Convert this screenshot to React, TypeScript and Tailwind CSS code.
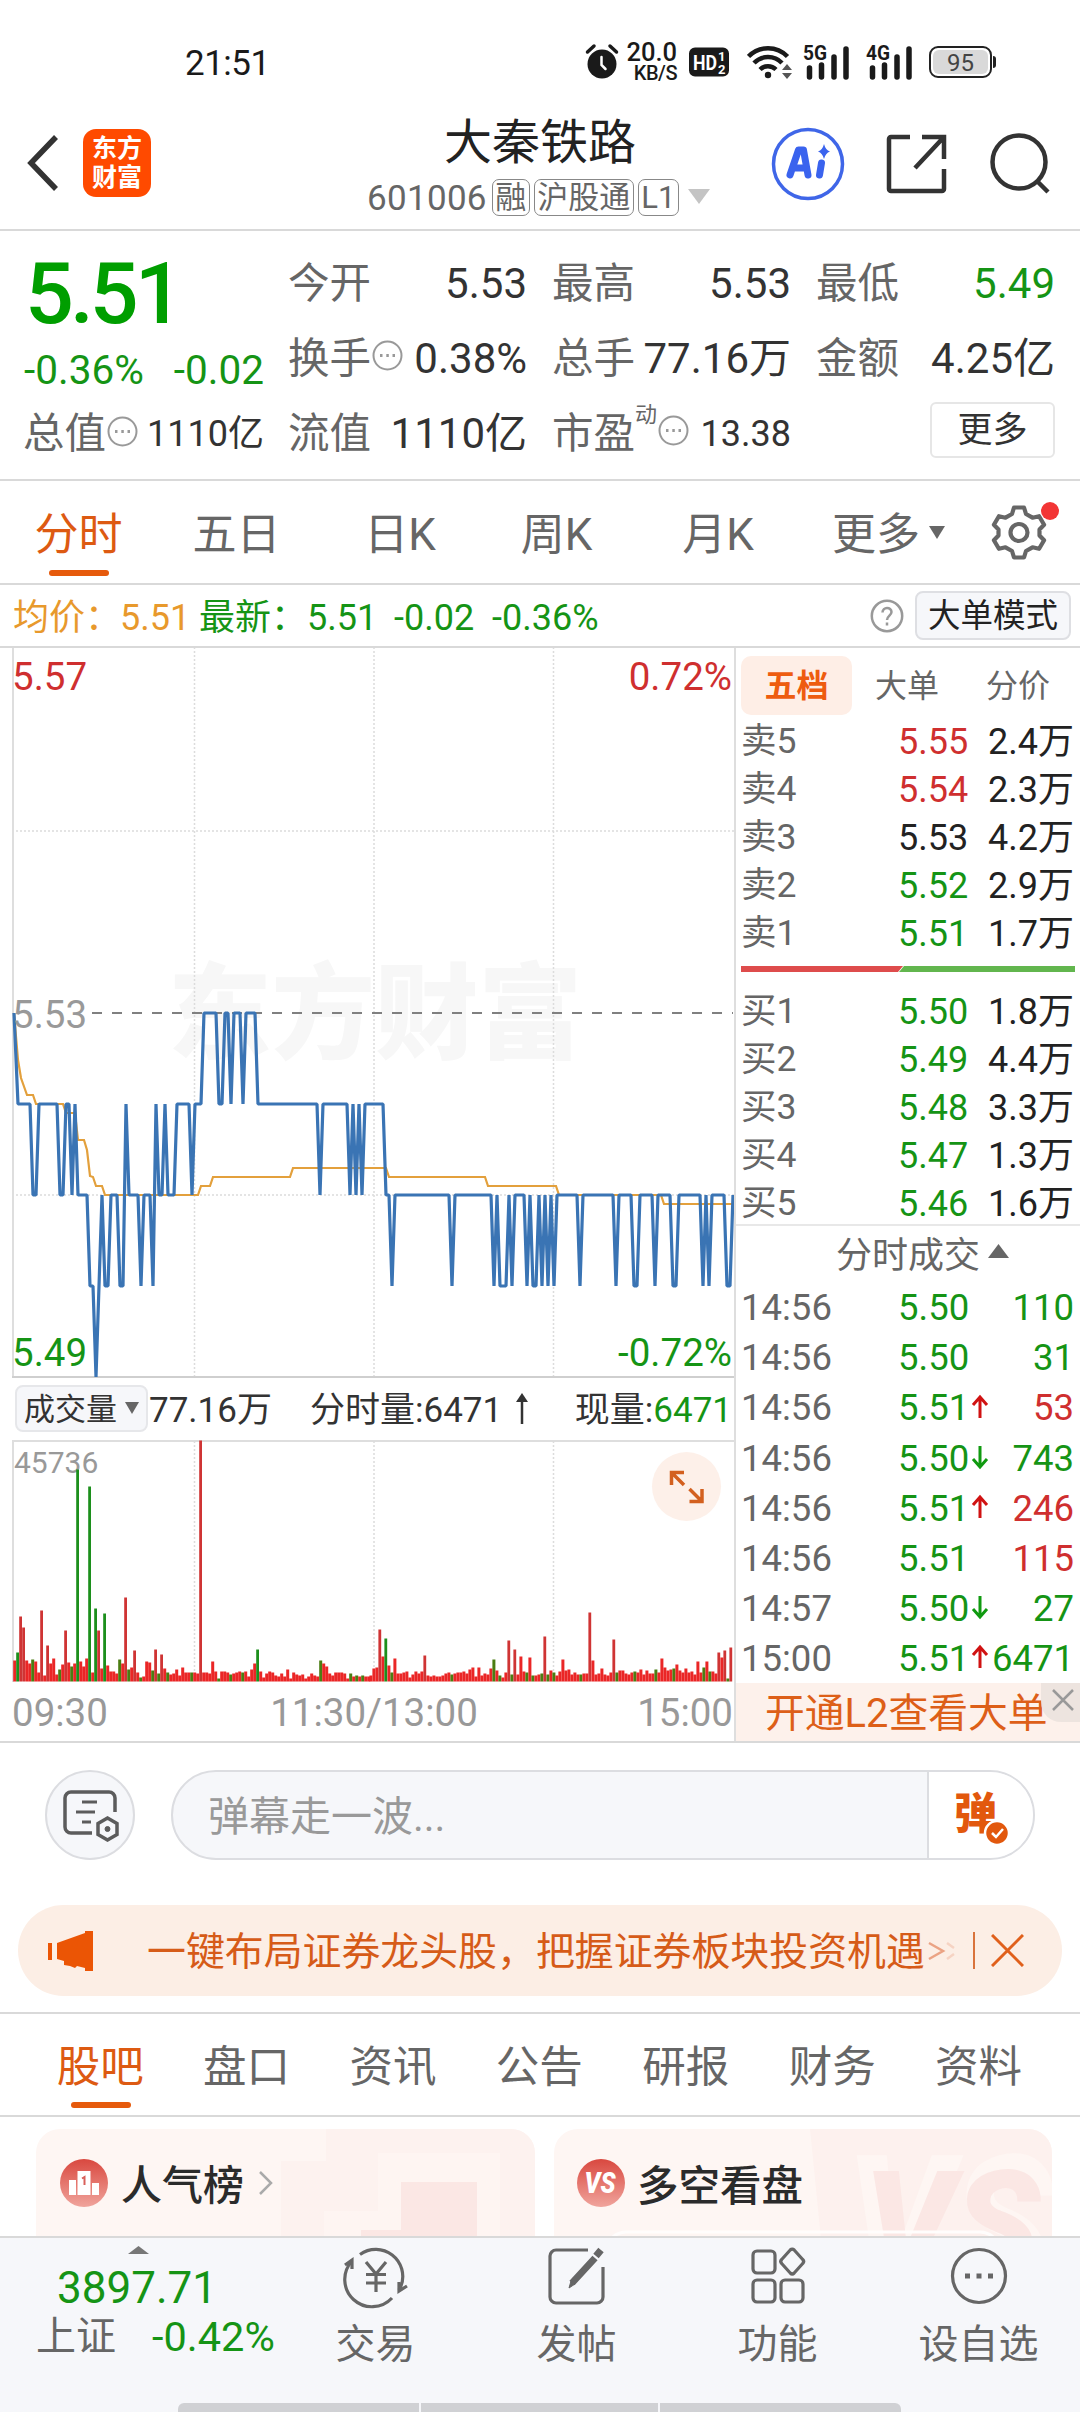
import React from 'react';
import clsx from 'clsx';

const UP = '#cf2f2f';
const DOWN = '#159415';

// [x, price in cents over 5.00]
const PRICE: [number, number][] = [
  [14, 53], [18, 52], [30, 52], [33, 51], [36, 51], [39, 52], [57, 52], [60, 51], [63, 51], [66, 52], [69, 52], [72, 51],
  [75, 52], [78, 51], [87, 51], [90, 50], [93, 50], [96, 49], [102, 51], [105, 50], [108, 50], [111, 51], [117, 51],
  [120, 50], [123, 50], [126, 52], [129, 51], [138, 51], [141, 50], [144, 51], [150, 51], [153, 50], [156, 52], [159, 51],
  [162, 51], [165, 52], [168, 51], [174, 51], [177, 52], [189, 52], [192, 51], [195, 52], [201, 52], [204, 53], [216, 53],
  [219, 52], [222, 52], [225, 53], [228, 53], [231, 52], [234, 53], [240, 53], [243, 52], [246, 53], [255, 53], [258, 52],
  [317, 52], [320, 51], [323, 52], [347, 52], [350, 51], [353, 52], [356, 51], [359, 52], [362, 51], [365, 52], [383, 52],
  [386, 51], [389, 51], [392, 50], [395, 51], [449, 51], [452, 50], [455, 51], [491, 51], [494, 50], [497, 51], [500, 50],
  [506, 50], [509, 51], [512, 50], [515, 51], [524, 51], [527, 50], [530, 51], [533, 50], [536, 50], [539, 51], [542, 50],
  [545, 51], [548, 50], [551, 51], [554, 50], [557, 51], [577, 51], [580, 50], [583, 51], [613, 51], [616, 50], [619, 51],
  [631, 51], [634, 50], [637, 50], [640, 51], [652, 51], [655, 50], [658, 51], [670, 51], [673, 50], [676, 50], [679, 51],
  [700, 51], [703, 50], [706, 51], [709, 50], [712, 51], [724, 51], [727, 50], [730, 50], [733, 51],
];

const AVERAGE =
  '14,366 18,413 21,431 27,448 33,448 36,457 63,457 66,466 75,466 78,493 84,493 87,503 90,529 93,530 96,539 102,539 105,548 198,548 201,539 210,539 213,530 290,530 293,521 386,521 389,530 485,530 488,539 556,539 559,548 661,548 664,557 733,557';

// minute volume bars, "g" marks a falling minute
const VOLUME =
  '21 29g 65 54 21 18 22g 20 9 71 6 36 18 23 7 12g 17 51 19 15g 18 212g 20 15 23 195g 9 73g 51 13 68g 16 10 10 8 22g 18 84 12g 14 31 9 4g 5 20 19 11g 32 8g 27 13 9g 7 8 12 6 14 9 9 9g 9 8 241 9 9 8 20 10 3g 10 10 9 7g 8 9 10 9g 10 5 12 18 32g 10 4 8 10 9 6 5 8 5 12 3 9 7 6 7 3 5 8 6 5 21g 18 15 8 6 9 9 9 8 3 8g 5 6g 5 6g 5 5 6 13 14 52 25 43g 16 9g 23 8 8 9 10 4 7 10 8 10 26 6 5 6 5 5 6 8 9 7g 8 9 9 10 8 12 14 5 14 6 8 7 13 22g 11 6g 4 9 41 7g 32 7 25 10 9g 24 6g 6 7 8g 45 7g 11 9g 6 10 22 11 12 7 9 7 7g 8 8 69 21 7 8 13 7 6 9 42 9g 11 11 8 7 9 10g 9 12 7 11 8 8 12g 9 23 14 11 12 13g 17 11 9 13 9 10 7 20 9 14g 20 10g 10 8 29 24 31 3g 34';

const bars = VOLUME.split(' ').map((v) => ({ height: parseInt(v, 10), down: v.endsWith('g') }));

const priceY = (cents: number) => 366 + (53 - cents) * 91;

const sells = [
  { label: '卖5', price: '5.55', qty: '2.4万', color: 'text-[#cf2f2f]' },
  { label: '卖4', price: '5.54', qty: '2.3万', color: 'text-[#cf2f2f]' },
  { label: '卖3', price: '5.53', qty: '4.2万', color: 'text-[#222]' },
  { label: '卖2', price: '5.52', qty: '2.9万', color: 'text-[#159415]' },
  { label: '卖1', price: '5.51', qty: '1.7万', color: 'text-[#159415]' },
];

const buys = [
  { label: '买1', price: '5.50', qty: '1.8万', color: 'text-[#159415]' },
  { label: '买2', price: '5.49', qty: '4.4万', color: 'text-[#159415]' },
  { label: '买3', price: '5.48', qty: '3.3万', color: 'text-[#159415]' },
  { label: '买4', price: '5.47', qty: '1.3万', color: 'text-[#159415]' },
  { label: '买5', price: '5.46', qty: '1.6万', color: 'text-[#159415]' },
];

const trades = [
  { time: '14:56', price: '5.50', dir: '', qty: '110', up: false },
  { time: '14:56', price: '5.50', dir: '', qty: '31', up: false },
  { time: '14:56', price: '5.51', dir: 'up', qty: '53', up: true },
  { time: '14:56', price: '5.50', dir: 'down', qty: '743', up: false },
  { time: '14:56', price: '5.51', dir: 'up', qty: '246', up: true },
  { time: '14:56', price: '5.51', dir: '', qty: '115', up: true },
  { time: '14:57', price: '5.50', dir: 'down', qty: '27', up: false },
  { time: '15:00', price: '5.51', dir: 'up', qty: '6471', up: false },
];

const newsTabs = ['股吧', '盘口', '资讯', '公告', '研报', '财务', '资料'];

const Signal = ({ label }: { label: string }) => (
  <svg className="overflow-visible" width="48" height="36" viewBox="0 0 48 36">
    <text x="0" y="16" fontSize="20" fontWeight="700" fill="#1a1a1a" textLength="24" lengthAdjust="spacingAndGlyphs">
      {label}
    </text>
    <path d="M6.5 24v9M18.5 21v12M31 13v20M43 5v28" stroke="#1a1a1a" strokeWidth="5.5" strokeLinecap="round" />
  </svg>
);

const StatusBar = () => (
  <div className="flex h-[120px] items-center pl-[185px] pt-1">
    <span className="w-[400px] pt-[2px] text-[35px] leading-none tracking-[-0.5px] text-[#1a1a1a]">21:51</span>
    <svg width="34" height="38" viewBox="0 0 34 38">
      <circle cx="17" cy="21" r="14.5" fill="#1a1a1a" />
      <path d="M2.5 9 9 3M31.500 9 25 3" stroke="#1a1a1a" strokeWidth="3.500" strokeLinecap="round" />
      <path d="M16.500 14v8l4 4" stroke="#fff" strokeWidth="2.500" fill="none" strokeLinecap="round" />
    </svg>
    <div className="ml-[6px] flex w-[52px] flex-col items-end text-[#1a1a1a]">
      <span className="text-[25.500px] font-medium leading-[23px]">20.0</span>
      <span className="text-[20px] font-medium leading-[19px] tracking-[-0.5px]">KB/S</span>
    </div>
    <svg className="ml-[12px]" width="41" height="30" viewBox="0 0 41 30">
      <path d="M6 .5h28a6 6 0 0 1 6 6v17a6 6 0 0 1-6 6H6a6 6 0 0 1-6-6v-17a6 6 0 0 1 6-6z" fill="#1a1a1a" />
      <text x="4" y="22.500" fontSize="21" fontWeight="700" fill="#fff" textLength="24" lengthAdjust="spacingAndGlyphs">HD</text>
      <text x="29" y="14" fontSize="13" fontWeight="700" fill="#fff">1</text>
      <text x="29" y="27" fontSize="13" fontWeight="700" fill="#fff">2</text>
    </svg>
    <svg className="ml-[17px]" width="46" height="36" viewBox="0 0 46 36">
      <g fill="none" stroke="#1a1a1a" strokeWidth="4.500">
        <path d="M1.500 12.500a27 27 0 0 1 39 0" />
        <path d="M7 19a19.500 19.500 0 0 1 28 0" />
        <path d="M13 25.500a11.500 11.500 0 0 1 16 0" />
      </g>
      <circle cx="21" cy="31" r="3.200" fill="#1a1a1a" />
      <path d="m40 20 5 6H35zM40 35l5-6H35z" fill="#555" />
    </svg>
    <div className="ml-[10px]"><Signal label="5G" /></div>
    <div className="ml-[15px]"><Signal label="4G" /></div>
    <div className="ml-[15px] flex h-[32px] w-[63px] items-center justify-center rounded-[9px] border-2 border-[#222] p-[2px]">
      <div className="flex h-full w-full items-center justify-center rounded-[6px] bg-[#d9d9d9] pt-px text-[24px] leading-none text-[#444]">95</div>
    </div>
    <div className="ml-px h-[12px] w-[3px] rounded-r bg-[#222]" />
  </div>
);

const Tag = ({ children }: { children: React.ReactNode }) => (
  <span className="flex h-[37px] shrink-0 items-center whitespace-nowrap rounded-[7px] border-[1.5px] border-[#888] px-[2.5px] text-[31px] leading-none">{children}</span>
);

const Header = () => (
  <div className="flex h-[111px] items-center border-b-2 border-[#d9d9d9]">
    <svg className="ml-[26px] mt-[-24px]" width="34" height="58" viewBox="0 0 34 58">
      <path d="M30 3 5 29l25 26" fill="none" stroke="#333" strokeWidth="5.500" />
    </svg>
    <div className="ml-[23px] mt-[-24px] flex h-[68px] w-[68px] flex-col items-center justify-center rounded-[13px] bg-[#ff4a00] text-[25px] font-bold leading-[29px] text-white">
      <span>东方</span>
      <span>财富</span>
    </div>
    <div className="ml-[216px] mt-[-15px] flex w-[346px] flex-col">
      <h1 className="h-[60px] pl-[77px] text-[48px] leading-[48px] text-[#222]">大秦铁路</h1>
      <div className="flex h-[37px] items-center gap-[4px] text-[#666]">
        <span className="mr-px pt-[2px] text-[35px] leading-none tracking-[0.3px]">601006</span>
        <Tag>融</Tag>
        <Tag>沪股通</Tag>
        <Tag>L1</Tag>
        <svg className="ml-[5px] shrink-0" width="22" height="16" viewBox="0 0 22 16"><path d="M0 0h22L11 15z" fill="#c4c4c4" /></svg>
      </div>
    </div>
    <svg className="ml-[58px] mt-[-22px]" width="74" height="74" viewBox="0 0 74 74">
      <circle cx="37" cy="37" r="34.500" fill="none" stroke="#3f66e8" strokeWidth="3.500" />
      <path d="M19 48 27.500 23h5L37 48M22 41h12" fill="none" stroke="#3a63ee" strokeWidth="7" strokeLinejoin="round" strokeLinecap="round" />
      <path d="M50.500 36 48.500 48" stroke="#3a63ee" strokeWidth="7" strokeLinecap="round" />
      <path d="M53 17q1.500 6 6 7.500-4.500 1.500-6 7.500-1.500-6-6-7.500 4.500-1.500 6-7.500z" fill="#3a63ee" />
    </svg>
    <svg className="ml-[41px] mt-[-22px]" width="62" height="62" viewBox="0 0 62 62" fill="none" stroke="#333" strokeWidth="4.500">
      <path d="M24 4H5a2 2 0 0 0-2 2v50a2 2 0 0 0 2 2h51a2 2 0 0 0 2-2V36" />
      <path d="M36 4h22v22M58 4 29 35" />
    </svg>
    <svg className="ml-[41px] mt-[-22px]" width="64" height="64" viewBox="0 0 64 64" fill="none" stroke="#333" strokeWidth="4.500">
      <circle cx="30" cy="30" r="26.500" />
      <path d="m48 49 11 11" />
    </svg>
  </div>
);

const MoreDot = () => (
  <svg width="31" height="31" viewBox="0 0 31 31">
    <circle cx="15.500" cy="15.500" r="14" fill="none" stroke="#999" strokeWidth="2" />
    <path d="M8 15.500h2.500M14.300 15.500h2.500M20.500 15.500H23" stroke="#999" strokeWidth="2.800" />
  </svg>
);

type CellProps = { label: string; value: string; dots?: boolean; sup?: string; small?: boolean; className?: string };

const Cell = ({ label, value, dots, sup, small, className }: CellProps) => (
  <div className="flex items-center">
    <span className="ml-[-1px] text-[41.500px] text-[#666]">{label}</span>
    {sup && <span className="mt-[-38px] text-[22px] text-[#666]">{sup}</span>}
    {dots && <span className="mt-[-6px] ml-px"><MoreDot /></span>}
    <span className={clsx('ml-auto whitespace-nowrap', small ? 'text-[36px]' : 'text-[42px]', className ?? 'text-[#333]')}>{value}</span>
  </div>
);

const Quote = () => (
  <div className="flex h-[250px] gap-[25px] border-b-2 border-[#d9d9d9] pl-[24px] leading-none">
    <div className="w-[240px]">
      <div className="h-[113px] pl-[1px] pt-[20px] text-[86px] font-medium tracking-[-4px] text-[#009e00]">5.51</div>
      <div className="flex h-[53px] items-center justify-between text-[40.500px] text-[#159415]">
        <span>-0.36%</span>
        <span>-0.02</span>
      </div>
      <div className="grid h-[74px] items-center"><Cell label="总值" value="1110亿" dots small /></div>
    </div>
    <div className="grid w-[766px] grid-cols-3 grid-rows-[75px_75px_75px] gap-x-[26px] pt-[15px]">
      <Cell label="今开" value="5.53" />
      <Cell label="最高" value="5.53" />
      <Cell label="最低" value="5.49" className="text-[#159415]" />
      <Cell label="换手" value="0.38%" dots />
      <Cell label="总手" value="77.16万" />
      <Cell label="金额" value="4.25亿" />
      <Cell label="流值" value="1110亿" />
      <Cell label="市盈" value="13.38" sup="动" dots small />
      <div className="mt-[-7px] flex items-center justify-end">
        <button className="h-[56px] w-[125px] rounded-[6px] border-2 border-[#e6e6e6] text-[35px] text-[#333]">更多</button>
      </div>
    </div>
  </div>
);

const ChartTabs = () => (
  <div className="flex h-[104px] items-center border-b-2 border-[#d9d9d9] pt-[6px] text-[44px] leading-none text-[#666]">
    <div className="relative w-[157px] text-center text-[#dd5a12]">
      分时
      <i className="absolute left-[49px] top-[57px] h-[6px] w-[60px] rounded-full bg-[#e65a0c]" />
    </div>
    <span className="w-[159px] text-center">五日</span>
    <span className="w-[168px] text-center">日K</span>
    <span className="w-[145px] text-center">周K</span>
    <span className="w-[178px] text-center">月K</span>
    <span className="ml-[25px]">更多</span>
    <svg className="mb-[5px] ml-[9px]" width="16" height="13" viewBox="0 0 16 13"><path d="M0 0h16L8 13z" fill="#666" /></svg>
    <div className="relative mb-[6px] ml-[45px]">
      <svg width="58" height="58" viewBox="0 0 58 58" fill="none" stroke="#666" strokeWidth="4.200" strokeLinejoin="round">
        <path d="M24 4.500h10l2 6.500 6.500 3.700 6.600-1.500 5 8.600L49.500 26.500v6l4.600 4.700-5 8.600-6.600-1.500L36 48l-2 6.500H24L22 48l-6.500-3.700-6.600 1.500-5-8.600 4.600-4.700v-6l-4.600-4.700 5-8.600 6.600 1.500L22 11z" />
        <circle cx="29" cy="29.500" r="8.500" />
      </svg>
      <i className="absolute left-[51px] top-[-1px] h-[18px] w-[18px] rounded-full bg-[#f23535]" />
    </div>
  </div>
);

const InfoRow = () => (
  <div className="flex h-[63px] items-center whitespace-pre border-b-2 border-[#d9d9d9] pl-[13px] text-[36px] leading-none text-[#159415]">
    <span className="w-[107px] pt-[4px] text-[#e8992c]">均价：</span>
    <span className="w-[79px] pt-[4px] text-[#e8992c]">5.51</span>
    <span className="w-[108px] pt-[4px]">最新：</span>
    <span className="w-[87px] pt-[4px]">5.51</span>
    <span className="w-[98px] pt-[4px]">-0.02</span>
    <span className="pt-[4px]">-0.36%</span>
    <svg className="ml-auto" width="34" height="34" viewBox="0 0 34 34">
      <circle cx="17" cy="17" r="15.200" fill="none" stroke="#999" strokeWidth="2.500" />
      <path d="M12.500 13.500c0-6 9-6 9-.5 0 3.500-4.500 3.800-4.500 8M17 23.500v3" fill="none" stroke="#999" strokeWidth="2.500" />
    </svg>
    <button className="ml-[11px] mr-[9px] h-[49px] w-[156px] rounded-[8px] border-2 border-[#dedfe3] bg-[#f6f7fa] pt-[2px] text-[32.500px] text-[#222]">大单模式</button>
  </div>
);

const PriceChart = () => (
  <svg className="block" width="735" height="730" viewBox="0 1 735 730">
    <text x="168" y="404" fontSize="104" fontWeight="900" fill="#f7f7f7" textLength="414" lengthAdjust="spacingAndGlyphs">东方财富</text>
    <g stroke="#dcdcdc" strokeWidth="1.500" strokeDasharray="2 2">
      <path d="M194.500 0v730M374 0v730M553.500 0v730M12 184h722M12 548h722" />
    </g>
    <path d="M13 0v730" stroke="#dedede" strokeWidth="2" />
    <path d="M12 730h722" stroke="#cfcfcf" strokeWidth="2" />
    <path d="M92 366h641" stroke="#808080" strokeWidth="2" strokeDasharray="10 10" />
    <polyline points={AVERAGE} fill="none" stroke="#e3a03c" strokeWidth="2.200" />
    <polyline points={PRICE.map(([x, c]) => `${x},${priceY(c)}`).join(' ')} fill="none" stroke="#3a74b4" strokeWidth="3.200" strokeLinejoin="bevel" />
    <g fontSize="38.500">
      <text x="12" y="43" fill={UP}>5.57</text>
      <text x="732" y="43" fill={UP} textAnchor="end">0.72%</text>
      <text x="12" y="381" fill="#999">5.53</text>
      <text x="12" y="719" fill={DOWN}>5.49</text>
      <text x="732" y="719" fill={DOWN} textAnchor="end">-0.72%</text>
    </g>
  </svg>
);

const VolumeHeader = () => (
  <div className="flex h-[61px] items-center pl-[15px] text-[35px] leading-none text-[#333]">
    <div className="flex h-[47px] w-[133px] items-center justify-between rounded-[8px] border-2 border-[#e6e7ea] bg-[#f6f7fa] px-[7px] text-[31px]">
      <span className="pt-[2px]">成交量</span>
      <svg width="14" height="13" viewBox="0 0 14 13"><path d="M0 0h14L7 12z" fill="#666" /></svg>
    </div>
    <span className="ml-[1px] w-[161px] pt-[3px]">77.16万</span>
    <span className="pt-[3px]">分时量:6471</span>
    <svg className="ml-[12px]" width="16" height="32" viewBox="0 0 16 32">
      <path d="M8 31V4" stroke="#333" strokeWidth="2.500" />
      <path d="m8 0 6 9H2z" fill="#333" />
    </svg>
    <span className="ml-auto mr-[2px] pt-[3px]">现量:<span className="text-[#159415]">6471</span></span>
  </div>
);

const VolumeChart = () => (
  <svg className="block" width="735" height="302" viewBox="0 0 735 302">
    <path d="M12 2h722" stroke="#dedede" strokeWidth="2" />
    <path d="M13 1v242" stroke="#dedede" strokeWidth="2" />
    <path d="M194.500 2v240M374 2v240M553.500 2v240" stroke="#dcdcdc" strokeWidth="1.500" strokeDasharray="2 2" />
    <text x="14" y="34" fontSize="30" fill="#999">45736</text>
    {bars.map((bar, i) => (
      <rect
        key={i}
        x={13.2 + i * 3 - (i > 118 ? 0.8 : 0)}
        y={242.5 - bar.height}
        width={bar.height > 25 ? 2.8 : 3}
        height={bar.height}
        fill={bar.down ? (bar.height > 25 ? '#1c8f1c' : '#4a7d12') : bar.height > 25 ? '#cf3434' : '#ea2626'}
      />
    ))}
    <circle cx="686.500" cy="47.500" r="34.500" fill="#fdf0e9" />
    <g fill="none" stroke="#d3601f" strokeWidth="3.500">
      <path d="M671.500 46V33.500H684M672 34l12 12M702 50v12.500h-12.500M701.500 62l-12-12" />
    </g>
    <g fontSize="38.500" fill="#999">
      <text x="12" y="287">09:30</text>
      <text x="374" y="287" textAnchor="middle">11:30/13:00</text>
      <text x="733" y="287" textAnchor="end">15:00</text>
    </g>
  </svg>
);

const LevelRow = ({ label, price, qty, color }: { label: string; price: string; qty: string; color: string }) => (
  <div className="flex h-[48px] items-center text-[36px]">
    <span className="w-[157px] text-[35.500px] text-[#666]">{label}</span>
    <span className={color}>{price}</span>
    <span className="ml-auto text-[#222]">{qty}</span>
  </div>
);

const Arrow = ({ dir }: { dir: string }) => (
  <svg className="mb-[4px] ml-[2px]" width="18" height="26" viewBox="0 0 18 26" fill="none" strokeWidth="3" stroke={dir === 'up' ? '#d01212' : '#109a10'}>
    <path d={dir === 'up' ? 'M9 24V4M2 11l7-8 7 8' : 'M9 2v20M2 15l7 8 7-8'} />
  </svg>
);

const OrderBook = () => (
  <div className="h-[1093px] w-[346px] border-l-2 border-[#dedede] leading-none">
    <div className="flex h-[70px] items-center pl-[5px] pt-[4px] text-[32px] text-[#666]">
      <span className="flex h-[59px] w-[111px] items-center justify-center rounded-[10px] bg-[#feeee6] pt-px font-bold text-[#ee5c10]">五档</span>
      <span className="w-[110px] pt-[2px] text-center">大单</span>
      <span className="w-[112px] pt-[2px] text-center">分价</span>
    </div>
    <div className="pl-[5px] pr-[6px]">{sells.map((row) => <LevelRow key={row.label} {...row} />)}</div>
    <svg className="ml-[5px] mt-[5px] block" width="334" height="14" viewBox="0 0 334 14">
      <path d="M0 3h162l-5 6H0z" fill="#de4c4c" />
      <path d="M163 3h171v6H158z" fill="#62b64e" />
    </svg>
    <div className="mb-[-4px] pl-[5px] pr-[6px] pt-[11px]">{buys.map((row) => <LevelRow key={row.label} {...row} />)}</div>
    <div className="flex h-[58px] items-center border-t-2 border-[#e8e8e8] pl-[100px] pt-[3px] text-[36px] text-[#666]">
      分时成交
      <svg className="mb-[10px] ml-[8px]" width="21" height="14" viewBox="0 0 21 14"><path d="M0 14 10.500 0 21 14z" fill="#666" /></svg>
    </div>
    {trades.map((t, i) => (
      <div key={i} className="flex h-[50.1px] items-center pl-[5px] pr-[6px] pt-[3px] text-[36.500px]">
        <span className="w-[157px] text-[#666]">{t.time}</span>
        <span className="text-[#159415]">{t.price}</span>
        {t.dir && <Arrow dir={t.dir} />}
        <span className={clsx('ml-auto', t.up ? 'text-[#cf2f2f]' : 'text-[#159415]')}>{t.qty}</span>
      </div>
    ))}
    <div className="relative flex h-[58px] items-center bg-[#fdf1eb] pl-[29px] pt-[4px] text-[39.800px] text-[#dd5f18]">
      开通L2查看大单
      <span className="absolute right-0 top-0 flex h-[39px] w-[39px] items-center justify-center rounded-bl-[20px] bg-[#ebe2de]/90">
        <svg className="mb-1 ml-1" width="22" height="22" viewBox="0 0 22 22"><path d="m1 1 20 20M21 1 1 21" stroke="#999" strokeWidth="2.500" /></svg>
      </span>
    </div>
  </div>
);

const Barrage = () => (
  <div className="flex h-[148px] items-center border-t-2 border-[#d9d9d9] pb-[3px] pl-[45px] leading-none">
    <div className="flex h-[90px] w-[90px] items-center justify-center rounded-full border-2 border-[#dcdde1] bg-[#f6f7fa]">
      <svg width="58" height="54" viewBox="0 0 58 54" fill="none" stroke="#5c5c5c" strokeWidth="3.500">
        <path d="M31 45H10a6 6 0 0 1-6-6V10a6 6 0 0 1 6-6h38a6 6 0 0 1 6 6v14" />
        <path d="M21 14h15M15 24h19M21 34h9" strokeWidth="3.200" />
        <path d="m46.500 30 9.500 5.500v11L46.500 52 37 46.500v-11z" />
        <circle cx="46.500" cy="41" r="2.500" fill="#5c5c5c" strokeWidth="1" />
      </svg>
    </div>
    <div className="ml-[36px] flex h-[90px] w-[864px] overflow-hidden rounded-full border-2 border-[#dcdde1] bg-[#f6f7fa]">
      <span className="flex w-[754px] items-center pl-[35px] pt-[5px] text-[41px] text-[#999]">弹幕走一波...</span>
      <div className="relative flex-1 border-l-2 border-[#dcdde1] bg-white pl-[25px] pt-[21px] text-[43px] font-black text-[#e2580d]">
        弹
        <svg className="absolute left-[54px] top-[47px]" width="28" height="28" viewBox="0 0 28 28">
          <circle cx="14" cy="14" r="12" fill="#e2580d" stroke="#fff" strokeWidth="2.500" />
          <path d="m9 14 4 4 7-8" fill="none" stroke="#fff" strokeWidth="2.500" />
        </svg>
      </div>
    </div>
  </div>
);

const Promo = () => (
  <div className="flex h-[125px] items-center border-b-2 border-[#d9d9d9] px-[18px]">
    <div className="flex h-[91px] w-full items-center rounded-full bg-[#fceee5] pl-[30px] leading-none text-[#d65b18]">
      <svg width="46" height="40" viewBox="0 0 46 40" fill="#eb5505">
        <path d="M0 12h4v17H0zM9 12 37 2V0h8v40h-8v-3l-8-2-2 2-5-2-6-1v-4l-7-2z" />
      </svg>
      <span className="ml-[53px] whitespace-nowrap pt-[3px] text-[38.900px]">一键布局证券龙头股，把握证券板块投资机遇</span>
      <svg className="ml-[2px]" width="28" height="22" viewBox="0 0 28 22" fill="none" strokeWidth="2.500">
        <path d="m2 3 14 8-14 8" stroke="#eba384" />
        <path d="m20 3 7 5M20 19l7-5" stroke="#f6d3c3" />
      </svg>
      <i className="ml-[18px] h-[37px] w-[2px] bg-[#d9733c]" />
      <svg className="ml-[16px]" width="33" height="33" viewBox="0 0 33 33"><path d="m1 1 31 31M32 1 1 32" stroke="#e0601c" strokeWidth="3" /></svg>
    </div>
  </div>
);

const NewsTabs = () => (
  <div className="flex h-[103px] items-center border-b-2 border-[#d9d9d9] pl-[27px] pt-[7px] text-[43.500px] leading-none text-[#666]">
    {newsTabs.map((tab, i) => (
      <div key={tab} className={clsx('relative w-[146.400px] text-center', i === 0 && 'text-[#dd5a12]')}>
        {tab}
        {i === 0 && <i className="absolute left-[44px] top-[56px] h-[6px] w-[60px] rounded-full bg-[#e65a0c]" />}
      </div>
    ))}
  </div>
);

const Cards = () => (
  <div className="flex h-[119px] gap-[19px] overflow-hidden pl-[36px] pt-[12px]">
    <div className="relative h-[140px] w-[499px] overflow-hidden rounded-[24px] bg-[#fef6f3]">
      <svg className="absolute inset-0" width="499" height="140" viewBox="0 0 499 140">
        <path d="M290 0h209v140H245V32h45z" fill="#fdf2ef" />
        <path d="M342 24h122v116H288V82h54z" fill="#fef5f2" />
        <path d="M365 53h76v87H325v-39h40z" fill="#fbe7e4" />
      </svg>
      <div className="relative flex items-center pl-[24px] pt-[30px] text-[41px] font-medium leading-none text-[#2b2b2b]">
        <svg width="48" height="48" viewBox="0 0 48 48">
          <defs>
            <linearGradient id="badge" x1="0" y1="0" x2="0" y2="1">
              <stop offset="0" stopColor="#d9483f" />
              <stop offset="1" stopColor="#f0a49c" />
            </linearGradient>
          </defs>
          <circle cx="24" cy="24" r="24" fill="url(#badge)" />
          <path d="M9 21h7v15H9zM17.500 12h13v24h-13zM32 24h7v12h-7z" fill="#fff" />
          <path d="M22 19.500 24.500 18v8" fill="none" stroke="#d9605a" strokeWidth="2" />
        </svg>
        <span className="ml-[13px] pt-[7px]">人气榜</span>
        <svg className="ml-[14px]" width="16" height="26" viewBox="0 0 16 26"><path d="m2 2 11 11L2 24" fill="none" stroke="#aaa" strokeWidth="2.500" /></svg>
      </div>
    </div>
    <div className="relative h-[140px] w-[498px] overflow-hidden rounded-[24px] bg-[#fef6f3]">
      <svg className="absolute inset-0" width="498" height="140" viewBox="0 0 498 140">
        <path d="M256 0h242v140H270z" fill="#fdf1ee" />
        <text x="292" y="162" fontSize="190" fontWeight="900" fontStyle="italic" fill="#fef6f3" textLength="206" lengthAdjust="spacingAndGlyphs">VS</text>
        <text x="310" y="146" fontSize="146" fontWeight="900" fontStyle="italic" fill="#fbe7e4" textLength="176" lengthAdjust="spacingAndGlyphs">VS</text>
        <rect x="52" y="103" width="394" height="60" rx="20" fill="none" stroke="#fffdfc" strokeWidth="3" />
      </svg>
      <div className="relative flex items-center pl-[23px] pt-[30px] text-[41.500px] font-medium leading-none text-[#2b2b2b]">
        <svg width="48" height="48" viewBox="0 0 48 48">
          <circle cx="24" cy="24" r="24" fill="url(#badge)" />
          <text x="23" y="34" fontSize="29" fontWeight="900" fontStyle="italic" fill="#fff" textAnchor="middle" textLength="31" lengthAdjust="spacingAndGlyphs">VS</text>
        </svg>
        <span className="ml-[12px] pt-[7px]">多空看盘</span>
      </div>
    </div>
  </div>
);

const NavItem = ({ label, width, children }: { label: string; width: string; children: React.ReactNode }) => (
  <div className={clsx('flex flex-col items-center pt-[5px] text-[40px] leading-none text-[#666]', width)}>
    <svg width="66" height="66" viewBox="0 0 66 66" fill="none" stroke="#666" strokeWidth="3.200">{children}</svg>
    <span className="mt-[16px] whitespace-nowrap">{label}</span>
  </div>
);

const BottomBar = () => (
  <div className="flex h-[176px] flex-col border-t-2 border-[#d9d9d9] bg-[#f6f7fa]">
    <div className="flex h-[165px]">
      <div className="w-[275px] leading-none">
        <svg className="ml-[128px] mt-[8px] block" width="21" height="8" viewBox="0 0 21 8"><path d="M0 8 10.500 0 21 8z" fill="#777" /></svg>
        <div className="ml-[57px] mt-[12px] text-[44px] text-[#159415]">3897.71</div>
        <div className="ml-[36px] mt-[6px] flex items-center whitespace-nowrap text-[40px] text-[#666]">
          上证<span className="ml-[36px] text-[41.500px] text-[#159415]">-0.42%</span>
        </div>
      </div>
      <NavItem label="交易" width="w-[201px]">
        <path d="M17 11.500A27 27 0 0 1 58 43l-2 4M49 55A27 27 0 0 1 9 18" />
        <path d="M2 22l7-5v9M64 43l-8 5v-9" />
        <path d="m23 19 10 12 10-12M33 31v18M23 31.500h20M23 40h20" />
      </NavItem>
      <NavItem label="发帖" width="w-[201px]">
        <path d="M44 7H12a6 6 0 0 0-6 6v41a6 6 0 0 0 6 6h41a6 6 0 0 0 6-6V24" />
        <path d="m52 13 5-6M51 15 28 40" strokeWidth="7" />
        <path d="m25 45 2-7 4 3z" fill="#666" strokeWidth="1" />
      </NavItem>
      <NavItem label="功能" width="w-[201px]">
        <rect x="8" y="8" width="22" height="22" rx="4" />
        <rect x="8" y="37" width="22" height="22" rx="4" />
        <rect x="36" y="37" width="22" height="22" rx="4" />
        <path d="M45.200 7q2-2 4 0l8.500 9.500q2 2 0 4L49.200 30q-2 2-4 0l-8.500-9.500q-2-2 0-4z" />
      </NavItem>
      <NavItem label="设自选" width="w-[201px]">
        <circle cx="33" cy="33" r="26.500" />
        <path d="M19 33h5M30.500 33h5M42 33h5" strokeWidth="5" />
      </NavItem>
    </div>
    <div className="ml-[178px] flex h-[9px] w-[723px] gap-[2px] overflow-hidden rounded-t-[6px]">
      <i className="h-full w-[241px] bg-[#d0d1d4]" />
      <i className="h-full w-[237px] bg-[#d0d1d4]" />
      <i className="h-full flex-1 bg-[#d0d1d4]" />
    </div>
  </div>
);

const App: React.FC = () => {
  return (
    <div className="h-[2412px] w-[1080px] overflow-hidden bg-white font-[Roboto,'Noto_Sans_CJK_SC',sans-serif]">
      <StatusBar />
      <Header />
      <Quote />
      <ChartTabs />
      <InfoRow />
      <div className="flex h-[1093px]">
        <div className="w-[734px]">
          <PriceChart />
          <VolumeHeader />
          <VolumeChart />
        </div>
        <OrderBook />
      </div>
      <Barrage />
      <Promo />
      <NewsTabs />
      <Cards />
      <BottomBar />
    </div>
  );
};

export default App;
